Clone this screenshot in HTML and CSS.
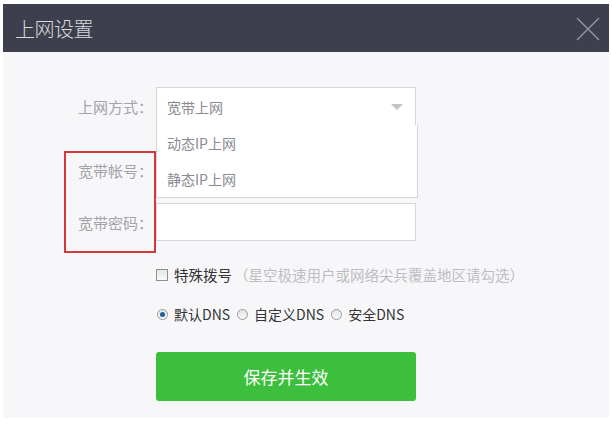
FILE: index.html
```html
<!DOCTYPE html>
<html lang="zh-CN">
<head>
  <meta charset="UTF-8" />
  <title>上网设置</title>
  <link rel="stylesheet" href="styles.css">
</head>
<body>
  <div class="dialog">
    <div class="dialog-header">
      <span class="title">上网设置</span>
      <svg class="close" width="24" height="24" viewBox="0 0 24 24">
        <path d="M1 1 L23 23 M23 1 L1 23" stroke="#9a9ba6" stroke-width="1.2" fill="none"/>
      </svg>
    </div>

    <div class="dialog-body">
      <div class="form">
        <div class="form-row row-mode">
          <label>上网方式：</label>
          <div class="select">
            <span>宽带上网</span>
            <span class="arrow"></span>
            <ul class="options">
              <li>动态IP上网</li>
              <li>静态IP上网</li>
            </ul>
          </div>
        </div>

        <div class="form-row row-account">
          <label>宽带帐号：</label>
          <input type="text">
        </div>

        <div class="form-row row-password">
          <label>宽带密码：</label>
          <input type="password">
        </div>

        <div class="mark"></div>

        <div class="option-row row-dial">
          <span class="checkbox"></span>
          <span class="dark">特殊拨号</span>
          <span class="hint">（星空极速用户或网络尖兵覆盖地区请勾选）</span>
        </div>

        <div class="option-row row-dns">
          <span class="radio checked"></span>
          <span class="dark">默认DNS</span>
          <span class="radio"></span>
          <span class="dark">自定义DNS</span>
          <span class="radio"></span>
          <span class="dark">安全DNS</span>
        </div>

        <button class="save">保存并生效</button>
      </div>
    </div>
  </div>
</body>
</html>
```

FILE: styles.css
```css
body {
  margin: 0;
  background: #fff;
  font-family: "Noto Sans CJK SC", "Liberation Sans", sans-serif;
}

.dialog {
  margin: 4px 3px;
  width: 606px;
  height: 414px;
  background: #f7f7f9;
}

.dialog-header {
  height: 48px;
  background: #3e3f4c;
  display: flex;
  align-items: center;
  justify-content: space-between;
  padding: 0 9px 0 12px;
}

.title {
  color: #d9d9de;
  font-size: 20px;
  font-weight: 300;
  letter-spacing: -0.5px;
}

.close {
  margin-top: 2px;
}

.form {
  position: relative;
  padding-top: 35px;
}

.form-row {
  display: flex;
  align-items: center;
  height: 38px;
}

.form-row label {
  width: 150px;
  padding-right: 3px;
  text-align: right;
  font-size: 15px;
  color: #a3a3a8;
}

.row-account {
  margin-top: 26px;
}

.row-password {
  margin-top: 14px;
}

input {
  width: 260px;
  height: 38px;
  box-sizing: border-box;
  border: 1px solid #d6d6da;
  background: #fff;
  margin: 0;
}

.select {
  position: relative;
  width: 260px;
  height: 38px;
  box-sizing: border-box;
  border: 1px solid #d6d6da;
  border-bottom: none;
  background: #fff;
  display: flex;
  align-items: center;
  padding-left: 10px;
  font-size: 14px;
  color: #8a8a90;
  z-index: 2;
}

.arrow {
  position: absolute;
  right: 12px;
  top: 16px;
  border-left: 6px solid transparent;
  border-right: 6px solid transparent;
  border-top: 6px solid #c4c4c8;
}

.options {
  position: absolute;
  left: -1px;
  top: 37px;
  width: 260px;
  margin: 0;
  padding: 0;
  list-style: none;
  background: #fff;
  border: 1px solid #d6d6da;
  border-top: none;
}

.options li {
  height: 36px;
  line-height: 36px;
  padding-left: 10px;
}

.mark {
  position: absolute;
  left: 61px;
  top: 99px;
  width: 88px;
  height: 98px;
  border: 2px solid #d2393c;
}

.option-row {
  display: flex;
  align-items: center;
  padding-left: 153px;
  font-size: 14.5px;
}

.row-dial {
  margin-top: 23px;
}

.row-dns {
  margin-top: 19px;
  font-size: 14px;
}

.dark {
  color: #333;
  margin-right: 6px;
}

.hint {
  color: #bdbdc1;
  margin-left: -4px;
}

.checkbox {
  width: 12px;
  height: 12px;
  box-sizing: border-box;
  border: 1px solid #8f8f8f;
  background: linear-gradient(#e6e6e6, #fafafa);
  margin-right: 6px;
}

.radio {
  width: 11px;
  height: 11px;
  box-sizing: border-box;
  border-radius: 50%;
  border: 1px solid #9a9a9a;
  background: linear-gradient(#e4e4e4, #fafafa);
  margin-right: 6px;
  margin-left: 1px;
  position: relative;
}

.radio.checked::after {
  content: "";
  position: absolute;
  left: 2px;
  top: 2px;
  width: 5px;
  height: 5px;
  border-radius: 50%;
  background: #1d5f9a;
}

.save {
  display: block;
  margin: 28px 0 0 153px;
  width: 260px;
  height: 49px;
  border: none;
  border-radius: 3px;
  background: #3cbf3c;
  color: #fff;
  font-family: inherit;
  font-size: 17px;
  cursor: pointer;
}
```
